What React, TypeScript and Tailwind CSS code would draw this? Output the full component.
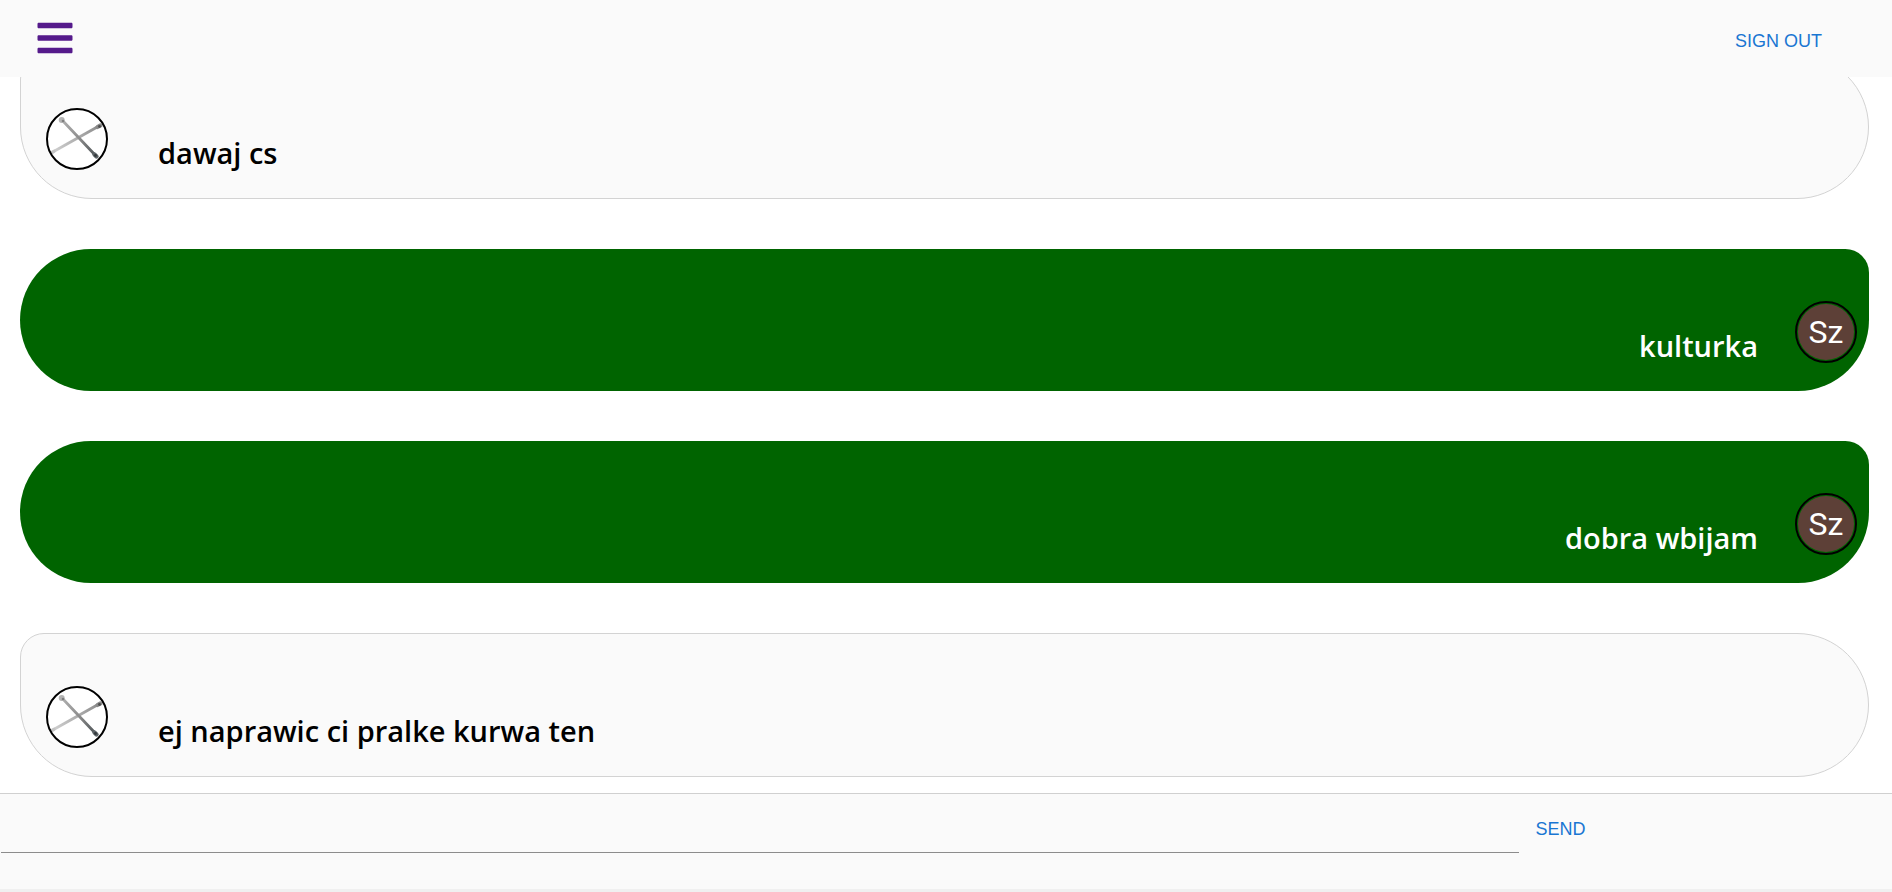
import { useId } from "react";
import { FaBars } from "react-icons/fa";

type Message = { id: number; text: string; mine: boolean };

const messages: Message[] = [
  { id: 1, text: "dawaj cs", mine: false },
  { id: 2, text: "kulturka", mine: true },
  { id: 3, text: "dobra wbijam", mine: true },
  { id: 4, text: "ej naprawic ci pralke kurwa ten", mine: false },
];

function SticksAvatar() {
  const id = useId();
  return (
    <svg
      viewBox="0 0 62 62"
      role="img"
      aria-label="Friend"
      className="size-[62px] shrink-0"
    >
      <defs>
        <clipPath id={`${id}-disc`}>
          <circle cx="31" cy="31" r="29" />
        </clipPath>
        <linearGradient id={`${id}-rising`} gradientUnits="userSpaceOnUse" x1="6" y1="45" x2="54" y2="18">
          <stop offset="0" stopColor="#d2d2d2" />
          <stop offset="0.5" stopColor="#b0b0b0" />
          <stop offset="1" stopColor="#8c8c8c" />
        </linearGradient>
        <linearGradient id={`${id}-falling`} gradientUnits="userSpaceOnUse" x1="16" y1="12" x2="51" y2="49">
          <stop offset="0" stopColor="#b0b0b0" />
          <stop offset="0.5" stopColor="#8c8c8c" />
          <stop offset="1" stopColor="#4a5053" />
        </linearGradient>
      </defs>
      <circle cx="31" cy="31" r="30" fill="#fff" />
      <g clipPath={`url(#${id}-disc)`} strokeLinecap="round">
        <path d="M5 45L53 18" stroke={`url(#${id}-rising)`} strokeWidth="2.8" />
        <path d="M16 12L50.5 48.5" stroke={`url(#${id}-falling)`} strokeWidth="2.8" />
        <circle cx="15.7" cy="12" r="3" fill="#b4b4b4" />
        <circle cx="17" cy="13" r="1.3" fill="#7f7f7f" />
        <path d="M51.5 19L54.5 17.4" stroke="#8a8a8a" strokeWidth="4.2" />
        <circle cx="53.5" cy="18.5" r="1.4" fill="#4d4d4d" />
        <path d="M48.5 46.5L50.5 48.5" stroke="#5c6366" strokeWidth="4.4" />
        <circle cx="49.5" cy="47.5" r="1.4" fill="#33393c" />
        <path d="M5 45L8 43.3" stroke="#c4c4c4" strokeWidth="3.2" />
      </g>
      <circle cx="31" cy="31" r="30" fill="none" stroke="#000" strokeWidth="2" />
    </svg>
  );
}

function InitialsAvatar() {
  return (
    <div className="size-[62px] shrink-0 rounded-full border-2 border-black p-px">
      <div className="flex size-full items-center justify-center rounded-full bg-[#5d4037] font-[Roboto,sans-serif] text-[32px] leading-none text-white">
        Sz
      </div>
    </div>
  );
}

function Bubble({ message }: { message: Message }) {
  if (message.mine) {
    return (
      <li className="flex h-[142px] shrink-0 justify-end gap-[37px] rounded-[75px] rounded-tr-[25px] bg-[#006400] pt-[52px] pr-3 text-white">
        <p className="pt-[25px] text-[29px] leading-10 font-semibold">{message.text}</p>
        <InitialsAvatar />
      </li>
    );
  }
  return (
    <li className="flex h-36 shrink-0 gap-[50px] rounded-[75px] rounded-tl-[25px] border border-[#d3d3d3] bg-[#fafafa] pt-[52px] pl-[25px] text-black">
      <SticksAvatar />
      <p className="pt-[25px] text-[29px] leading-10 font-semibold">{message.text}</p>
    </li>
  );
}

export default function App() {
  return (
    <div className="flex h-screen flex-col bg-white font-['Open_Sans','Noto_Sans',sans-serif]">
      <header className="z-10 flex h-[77px] shrink-0 items-center justify-between bg-[#fafafa] pr-[70px] pl-[35px]">
        <a href="#menu" aria-label="Menu" className="pb-0.5 text-[#551a8b]">
          <FaBars size={40} />
        </a>
        <button
          type="button"
          className="pt-1 font-['Liberation_Sans',sans-serif] text-lg text-[#1976d2]"
        >
          SIGN OUT
        </button>
      </header>

      <main className="flex min-h-0 flex-1 flex-col justify-end overflow-hidden pr-[23px] pb-4 pl-5">
        <ul className="flex flex-col gap-[50px]">
          {messages.map((message) => (
            <Bubble key={message.id} message={message} />
          ))}
        </ul>
      </main>

      <form
        className="flex h-[99px] shrink-0 items-start gap-4 border-t border-b-3 border-t-[#d0d0d0] border-b-[#f0f0f0] bg-[#fafafa] pl-px"
        onSubmit={(event) => event.preventDefault()}
      >
        <input
          type="text"
          aria-label="Message"
          className="h-[59px] w-[80.3%] border-b border-[#8c8c8c] bg-transparent px-2 pt-4 text-xl outline-none"
        />
        <button
          type="submit"
          className="pt-[21px] font-['Liberation_Sans',sans-serif] text-lg text-[#1976d2]"
        >
          SEND
        </button>
      </form>
    </div>
  );
}
